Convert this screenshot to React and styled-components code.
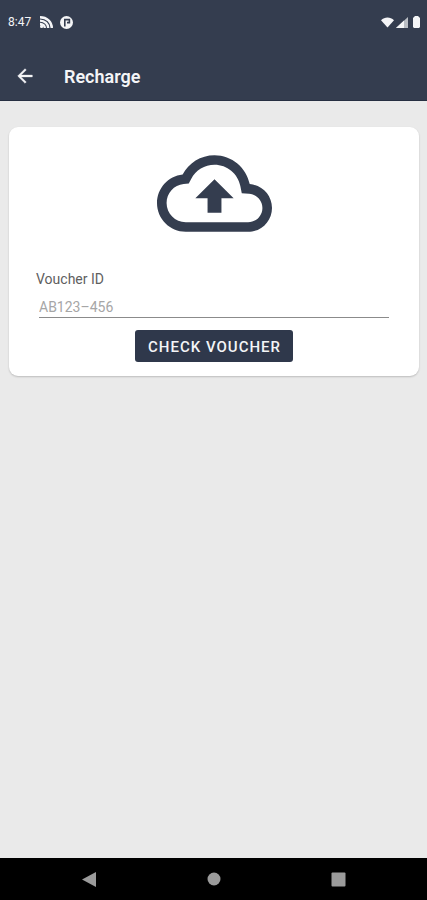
import React from 'react'
import styled, { createGlobalStyle } from 'styled-components'

const GlobalStyle = createGlobalStyle`
  * {
    box-sizing: border-box;
  }
  body {
    margin: 0;
    background: #eaeaea;
    font-family: Roboto, "Liberation Sans", sans-serif;
  }
`

const Screen = styled.div`
  min-height: 100vh;
  display: flex;
  flex-direction: column;
`

const Header = styled.header`
  background: #343d4f;
  color: #fff;
  border-bottom: 1px solid #262f41;
`

const StatusBar = styled.div`
  height: 44px;
  padding: 0 6px 0 8px;
  display: flex;
  align-items: center;
  justify-content: space-between;
  color: #f4f5f7;
`

const StatusGroup = styled.div`
  display: flex;
  align-items: center;
  gap: ${props => props.$gap};

  svg {
    display: block;
  }
`

const Clock = styled.span`
  font-size: 12px;
  line-height: 16px;
  margin-right: 2px;
`

const AppBar = styled.div`
  height: 56px;
  padding: 8px 14px 0;
  display: flex;
  align-items: center;
  gap: 28px;
`

const BackButton = styled.button`
  padding: 0;
  border: 0;
  background: none;
  color: #f4f5f7;
  cursor: pointer;

  svg {
    display: block;
  }
`

const Title = styled.h1`
  margin: 0;
  padding-top: 2px;
  font-size: 18px;
  line-height: 24px;
  font-weight: 600;
  color: #f4f5f7;
`

const Content = styled.main`
  flex: 1;
  padding: 26px 8px 26px 9px;
`

const Card = styled.form`
  display: flex;
  flex-direction: column;
  align-items: center;
  padding: 28px 27px 14px;
  background: #fff;
  border-radius: 9px;
  box-shadow: 0 1px 2px rgba(0, 0, 0, 0.2);
`

const CloudIcon = styled.svg`
  display: block;
  width: 115px;
  height: 77px;
  fill: #343d4f;
`

const Field = styled.div`
  align-self: stretch;
  margin: 38px 0 12px;
`

const Label = styled.label`
  display: block;
  font-size: 14px;
  line-height: 18px;
  color: #606060;
`

const Input = styled.input`
  display: block;
  width: calc(100% - 6px);
  height: 30px;
  margin: 0 3px;
  padding: 8px 0 0;
  border: 0;
  border-bottom: 1px solid #8b8b8b;
  border-radius: 0;
  background: none;
  font-family: inherit;
  font-size: 14px;
  color: #333;
  outline: none;

  &::placeholder {
    color: #a6a6a6;
  }
`

const Button = styled.button`
  height: 32px;
  padding: 2px 12px 0 13px;
  border: 0;
  border-radius: 3px;
  background: #2f384b;
  color: #f4f5f7;
  font-family: inherit;
  font-size: 15px;
  font-weight: 500;
  letter-spacing: 1px;
  text-transform: uppercase;
  cursor: pointer;
`

const NavBar = styled.nav`
  height: 42px;
  padding: 0 81px;
  display: flex;
  align-items: center;
  justify-content: space-between;
  background: #000;
`

const NavButton = styled.button`
  padding: 0;
  border: 0;
  background: none;
  cursor: pointer;

  svg {
    display: block;
    fill: #9b9b9b;
  }
`

const App = () => (
  <Screen>
    <GlobalStyle />
    <Header>
      <StatusBar>
        <StatusGroup $gap="7px">
          <Clock>8:47</Clock>
          <svg width="13" height="12" viewBox="0 0 13 12" fill="none" stroke="currentColor" strokeWidth="2.4">
            <path d="M0 1.2C7 1.2 11.8 6 11.8 12M0 4.6c5 0 8.2 3.4 8.2 7.4M0 8c3 0 4.800 2 4.800 4" />
            <circle cx="1.6" cy="10.4" r="1.6" fill="currentColor" stroke="none" />
          </svg>
          <svg width="13" height="13" viewBox="0 0 13 13">
            <circle cx="6.5" cy="6.5" r="6.5" fill="currentColor" />
            <path d="M4.8 10.6V3.6h4.6v3H7" fill="none" stroke="#343d4f" strokeWidth="1.6" />
          </svg>
        </StatusGroup>
        <StatusGroup $gap="2px">
          <svg width="13" height="11" viewBox="0 0 14 11" fill="currentColor">
            <path d="M0 3C4 -1 10 -1 14 3L7 11z" />
          </svg>
          <svg width="12" height="11" viewBox="0 0 12 11" fill="currentColor">
            <path d="M0 11L12 0v11z" opacity="0.7" />
            <path d="M0 11L8 3.6V11z" />
          </svg>
          <svg width="11" height="12" viewBox="0 0 11 12" fill="currentColor">
            <path d="M3 2l2-2h3l2 2v9l-1 1H4l-1-1z" />
          </svg>
        </StatusGroup>
      </StatusBar>
      <AppBar>
        <BackButton type="button" aria-label="Back">
          <svg width="22" height="22" viewBox="0 0 24 24" fill="currentColor" stroke="currentColor" strokeWidth="0.4">
            <path d="M20 11H7.83l5.59-5.59L12 4l-8 8 8 8 1.41-1.41L7.83 13H20v-2z" />
          </svg>
        </BackButton>
        <Title>Recharge</Title>
      </AppBar>
    </Header>
    <Content>
      <Card onSubmit={e => e.preventDefault()}>
        <CloudIcon viewBox="0 4 24 16" aria-hidden="true">
          <path d="M19.35 10.04C18.67 6.59 15.64 4 12 4 9.11 4 6.6 5.64 5.35 8.04 2.34 8.36 0 10.91 0 14c0 3.31 2.69 6 6 6h13c2.76 0 5-2.24 5-5 0-2.64-2.05-4.78-4.65-4.96zM19 18H6c-2.21 0-4-1.79-4-4 0-2.05 1.53-3.76 3.56-3.97l1.07-.11.5-.95C8.08 7.14 9.94 6 12 6c2.62 0 4.88 1.86 5.39 4.43l.3 1.5 1.53.11c1.56.1 2.78 1.41 2.78 2.96 0 1.65-1.35 3-3 3zM8 13h2.55v3h2.9v-3H16l-4-4z" />
        </CloudIcon>
        <Field>
          <Label htmlFor="voucher">Voucher ID</Label>
          <Input id="voucher" type="text" placeholder="AB123–456" />
        </Field>
        <Button type="submit">Check Voucher</Button>
      </Card>
    </Content>
    <NavBar>
      <NavButton type="button" aria-label="Back">
        <svg width="15" height="15" viewBox="0 0 15 15">
          <path d="M15 0v15L1 7.5z" />
        </svg>
      </NavButton>
      <NavButton type="button" aria-label="Home">
        <svg width="14" height="14" viewBox="0 0 14 14">
          <circle cx="7" cy="7" r="6.5" />
        </svg>
      </NavButton>
      <NavButton type="button" aria-label="Recent apps">
        <svg width="15" height="15" viewBox="0 0 15 15">
          <rect x="0.5" y="0.5" width="14" height="14" rx="1" />
        </svg>
      </NavButton>
    </NavBar>
  </Screen>
)

export default App
